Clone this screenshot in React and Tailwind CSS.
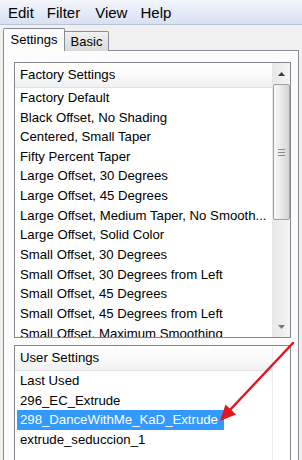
export default function App() {
  const factory = [
    "Factory Default",
    "Black Offset, No Shading",
    "Centered, Small Taper",
    "Fifty Percent Taper",
    "Large Offset, 30 Degrees",
    "Large Offset, 45 Degrees",
    "Large Offset, Medium Taper, No Smooth...",
    "Large Offset, Solid Color",
    "Small Offset, 30 Degrees",
    "Small Offset, 30 Degrees from Left",
    "Small Offset, 45 Degrees",
    "Small Offset, 45 Degrees from Left",
    "Small Offset, Maximum Smoothing",
  ];
  const user = ["Last Used", "296_EC_Extrude", "298_DanceWithMe_KaD_Extrude", "extrude_seduccion_1"];
  const font = { fontFamily: '"Liberation Sans", Arial, sans-serif' };

  return (
    <div className="relative w-[302px] h-[460px] overflow-hidden bg-[#f0f0f0] text-black" style={font}>
      {/* menu bar */}
      <div className="flex items-center h-[25px] border-b border-[#b9c3d6] bg-gradient-to-b from-[#f3f6fc] to-[#d8e0f2] text-[15px] leading-none">
        <span className="ml-[8px]">Edit</span>
        <span className="ml-[13px]">Filter</span>
        <span className="ml-[15px]">View</span>
        <span className="ml-[13px]">Help</span>
      </div>

      <div className="pt-[3px] pl-[3px] pr-[3px]">
        {/* tabs */}
        <div className="flex items-end h-[23px] text-[13px] leading-none">
          <div className="relative z-10 flex items-center justify-center w-[62px] h-[23px] bg-[#fcfcfc] border border-b-0 border-[#898c95] rounded-t-[2px] pb-[2px]">
            Settings
          </div>
          <div className="flex items-center justify-center w-[45px] h-[20px] -ml-[1px] bg-gradient-to-b from-[#f2f2f2] to-[#d9d9d9] border border-b-0 border-[#898c95] rounded-tr-[2px] pb-[1px]">
            Basic
          </div>
        </div>

        {/* panel */}
        <div className="-mt-[1px] h-[420px] border border-[#898c95] bg-[#fcfcfc] pt-[11px] pl-[10px] pr-[7px] flex flex-col gap-[7px] text-[13.2px]">
          {/* factory list */}
          <div className="flex h-[276px] shrink-0 border border-[#828790] bg-white overflow-hidden">
            <div className="flex-1 flex flex-col overflow-hidden">
              <div className="h-[25px] shrink-0 flex items-center pl-[5px] pb-[1px] border-b border-[#e3e3e3] bg-gradient-to-b from-[#ffffff] via-[#fbfbfb] to-[#eff0f2]">
                Factory Settings
              </div>
              <div className="flex flex-col">
                {factory.map((t) => (
                  <div key={t} className="h-[19.65px] shrink-0 flex items-center pl-[5px] whitespace-nowrap">
                    {t}
                  </div>
                ))}
              </div>
            </div>
            {/* scrollbar */}
            <div className="w-[18px] shrink-0 flex flex-col border-l border-[#e6e6e6] bg-gradient-to-r from-[#e8e8e8] to-[#f4f4f4]">
              <div className="h-[21px] shrink-0 flex items-center justify-center">
                <svg width="7" height="4" viewBox="0 0 7 4">
                  <path d="M0 4 L3.5 0 L7 4 Z" fill="#3c3c3c" />
                </svg>
              </div>
              <div className="flex-1 flex flex-col">
                <div className="h-[136px] border border-[#a3a3a3] rounded-[2px] bg-gradient-to-r from-[#f6f6f6] via-[#e9e9e9] to-[#d3d3d3] flex flex-col items-center justify-center gap-[2px]">
                  <div className="w-[7px] h-[1px] bg-[#8a8a8a]" />
                  <div className="w-[7px] h-[1px] bg-[#8a8a8a]" />
                  <div className="w-[7px] h-[1px] bg-[#8a8a8a]" />
                </div>
              </div>
              <div className="h-[21px] shrink-0 flex items-center justify-center">
                <svg width="7" height="4" viewBox="0 0 7 4">
                  <path d="M0 0 L7 0 L3.5 4 Z" fill="#7a7a7a" />
                </svg>
              </div>
            </div>
          </div>

          {/* user list */}
          <div className="flex flex-1 border border-[#828790] bg-white overflow-hidden">
            <div className="flex-1 flex flex-col">
              <div className="h-[25px] shrink-0 flex items-center pl-[5px] pb-[1px] border-b border-[#e3e3e3] bg-gradient-to-b from-[#ffffff] via-[#fbfbfb] to-[#eff0f2]">
                User Settings
              </div>
              <div className="flex flex-col items-start">
                {user.map((t, i) =>
                  i === 2 ? (
                    <div key={t} className="h-[19.65px] ml-[2px] pl-[3px] pr-[6px] flex items-center bg-[#3399ff] text-white whitespace-nowrap">
                      {t}
                    </div>
                  ) : (
                    <div key={t} className="h-[19.65px] pl-[5px] flex items-center whitespace-nowrap">
                      {t}
                    </div>
                  )
                )}
              </div>
            </div>
            <div className="w-[18px] shrink-0 border-l border-[#ececec] bg-white" />
          </div>
        </div>
      </div>

      {/* red arrow */}
      <svg className="absolute left-0 top-0 pointer-events-none" width="302" height="460" viewBox="0 0 302 460">
        <line x1="293" y1="343" x2="229" y2="411" stroke="#e3151d" strokeWidth="2.5" strokeLinecap="round" />
        <path d="M220 421 L225.5 404.5 L236 414.5 Z" fill="#e3151d" />
      </svg>
    </div>
  );
}
